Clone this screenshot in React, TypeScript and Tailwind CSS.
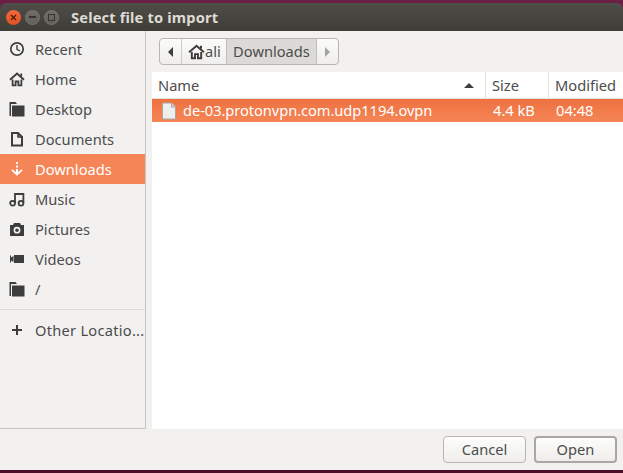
import React from 'react';

const RecentIcon = () => (
  <svg width="16" height="16" viewBox="0 0 16 16" fill="none" stroke="#3d3d3d">
    <circle cx="8" cy="8" r="6.2" strokeWidth="1.7" />
    <path d="M8 4v4.3L11 10" strokeWidth="1.4" />
  </svg>
);

const HomeIcon = ({ size = 16 }: { size?: number }) => (
  <svg width={size} height={size} viewBox="0 0 16 16" fill="none" stroke="#3d3d3d">
    <path d="M1 8.8 8 2.6l7 6.2" strokeWidth="1.9" />
    <path d="M12.2 5.5V2.5" strokeWidth="1.8" />
    <path d="M3.6 8.5V14.4H6.6V10.5H9.4V14.4H12.4V8.5" strokeWidth="1.8" />
  </svg>
);

const FolderIcon = () => (
  <svg width="16" height="16" viewBox="0 0 16 16" fill="#3d3d3d">
    <path d="M0.5 1h6l1.5 2H2v12H0.5Z" />
    <path d="M3 4.5h12.5V15.5H3Z" />
  </svg>
);

const DocumentIcon = () => (
  <svg width="16" height="16" viewBox="0 0 16 16" fill="none" stroke="#3d3d3d" strokeWidth="2">
    <path d="M3 2h6l4 4v8.5H3Z" />
    <path d="M9 1.5V6h4.5" strokeWidth="1.6" />
  </svg>
);

const DownloadIcon = () => (
  <svg width="16" height="16" viewBox="0 0 16 16" fill="#ffffff">
    <rect x="7" y="1" width="2" height="2" />
    <rect x="7" y="4.5" width="2" height="2" />
    <path d="M7 8h2v3.2l3.4-3 1.3 1.4L8 14.8 2.3 9.6l1.3-1.4L7 11.2Z" />
  </svg>
);

const MusicIcon = () => (
  <svg width="16" height="16" viewBox="0 0 16 16" fill="none" stroke="#3d3d3d" strokeWidth="1.8">
    <circle cx="3.6" cy="12.2" r="2.4" />
    <circle cx="12" cy="12.2" r="2.4" />
    <path d="M6 12V3h8.4v9" />
  </svg>
);

const CameraIcon = () => (
  <svg width="16" height="16" viewBox="0 0 16 16" fill="#3d3d3d">
    <path
      fillRule="evenodd"
      d="M1 4h3l1-2h6l1 2h3v11H1ZM8 5.8a3.4 3.4 0 1 0 0 6.8 3.4 3.4 0 0 0 0-6.8Z"
    />
    <circle cx="8" cy="9.2" r="1.7" />
  </svg>
);

const VideoIcon = () => (
  <svg width="16" height="16" viewBox="0 0 16 16" fill="#3d3d3d">
    <rect x="5" y="4" width="10" height="8" />
    <path d="M1 4.5h1v7H1ZM2 6.5 4.5 5v6L2 9.5Z" />
  </svg>
);

const PlusIcon = () => (
  <svg width="16" height="16" viewBox="0 0 16 16" fill="#3d3d3d">
    <path d="M7 3h2v4h4v2H9v4H7V9H3V7h4Z" />
  </svg>
);

const FileIcon = () => (
  <svg width="16" height="18" viewBox="0 0 16 18">
    <path d="M1.5 1h9l4 4v12h-13Z" fill="#eeeeec" stroke="#a9a7a2" />
    <path d="M10.5 1v4h4" fill="#d6d4d0" stroke="#a9a7a2" />
  </svg>
);

const places = [
  { label: 'Recent', icon: <RecentIcon /> },
  { label: 'Home', icon: <HomeIcon /> },
  { label: 'Desktop', icon: <FolderIcon /> },
  { label: 'Documents', icon: <DocumentIcon /> },
  { label: 'Downloads', icon: <DownloadIcon />, active: true },
  { label: 'Music', icon: <MusicIcon /> },
  { label: 'Pictures', icon: <CameraIcon /> },
  { label: 'Videos', icon: <VideoIcon /> },
  { label: '/', icon: <FolderIcon /> },
];

const PlaceRow = ({ label, icon, active }: { label: string; icon: React.ReactNode; active?: boolean }) => (
  <div
    className={`flex h-[30px] items-center gap-[10px] pl-[9px] ${active ? 'bg-[#f58556] text-white' : 'text-[#4c4c4c]'}`}
  >
    {icon}
    <span>{label}</span>
  </div>
);

const WindowButton = ({ children, close }: { children?: React.ReactNode; close?: boolean }) => (
  <div
    className={`flex h-[15px] w-[15px] items-center justify-center rounded-full ${
      close
        ? 'bg-gradient-to-b from-[#f2693a] to-[#e2501f]'
        : 'border border-[#77756e] bg-gradient-to-b from-[#6f6d66] to-[#62605a]'
    }`}
  >
    {children}
  </div>
);

export default function App() {
  return (
    <div
      className="flex h-[473px] w-[623px] flex-col overflow-hidden bg-[#f2f1f0] text-[14.67px] leading-none text-[#4c4c4c]"
      style={{ fontFamily: '"Noto Sans", sans-serif' }}
    >
      {/* title bar, sits on the desktop colour */}
      <div className="bg-[#6b1f45] pt-[3px]">
        <div className="flex h-[28px] items-center rounded-t-[6px] bg-gradient-to-b from-[#4f4d47] to-[#3e3d38] pl-[6px]">
          <div className="flex items-center gap-[4px]">
            <WindowButton close>
              <svg width="7" height="7" viewBox="0 0 7 7" stroke="#4a1a0a" strokeWidth="1.2">
                <path d="M1 1l5 5M6 1L1 6" />
              </svg>
            </WindowButton>
            <WindowButton>
              <div className="h-[2px] w-[7px] bg-[#35342f]" />
            </WindowButton>
            <WindowButton>
              <div className="h-[7px] w-[7px] border border-[#35342f]" />
            </WindowButton>
          </div>
          <span className="ml-[12px] text-[14.67px] font-bold tracking-[0.15px] text-[#dfdbd2]">
            Select file to import
          </span>
        </div>
      </div>

      {/* body */}
      <div className="flex h-[398px]">
        <div className="h-full w-[146px] shrink-0 border-r border-b border-[#c8c5c0] pt-[3px]">
          {places.map((p) => (
            <PlaceRow key={p.label} {...p} />
          ))}
          <div className="mt-[5px] border-t border-[#dedcd9] pt-[5px]">
            <div className="flex h-[30px] items-center gap-[10px] pl-[9px]">
              <PlusIcon />
              <span className="whitespace-nowrap tracking-[0.25px]">Other Locatio...</span>
            </div>
          </div>
        </div>

        <div className="flex min-w-0 flex-1 flex-col pl-[6px]">
          {/* path bar */}
          <div className="flex h-[41px] items-start pl-[7px] pt-[7px]">
            <div className="flex h-[27px] overflow-hidden rounded-[4px] border border-[#b9b6b0] bg-gradient-to-b from-[#fbfbfa] to-[#efeeec]">
              <div className="flex w-[22px] items-center justify-center border-r border-[#cfccc7]">
                <div className="h-0 w-0 border-y-[5px] border-r-[5px] border-y-transparent border-r-[#3d3d3d]" />
              </div>
              <div className="flex w-[44px] items-center pl-[6px]">
                <HomeIcon size={17} />
                <span>ali</span>
              </div>
              <div className="flex w-[91px] items-center justify-center border-x border-[#c2bfb9] bg-[#dcdad6]">
                Downloads
              </div>
              <div className="flex w-[21px] items-center justify-center">
                <div className="h-0 w-0 border-y-[5px] border-l-[5px] border-y-transparent border-l-[#a5a39e]" />
              </div>
            </div>
          </div>

          {/* file list */}
          <div className="flex-1 bg-white">
            <div className="flex h-[27px] items-stretch border-b border-[#e3e1de] pl-[6px]">
              <div className="flex w-[328px] items-center justify-between border-r border-[#e3e1de] pr-[11px]">
                <span>Name</span>
                <div className="h-0 w-0 border-x-[5px] border-b-[5px] border-x-transparent border-b-[#3d3d3d]" />
              </div>
              <div className="flex w-[63px] items-center border-r border-[#e3e1de] pl-[6px]">Size</div>
              <div className="flex flex-1 items-center whitespace-nowrap pl-[6px]">Modified</div>
            </div>
            <div className="flex h-[23px] items-center bg-gradient-to-b from-[#ef7140] to-[#f58556] text-white">
              <div className="flex w-[334px] items-center gap-[6px] pl-[9px]">
                <FileIcon />
                <span className="whitespace-nowrap tracking-[-0.06px]">de-03.protonvpn.com.udp1194.ovpn</span>
              </div>
              <div className="w-[63px] pl-[7px]">4.4 kB</div>
              <div className="pl-[7px]">04:48</div>
            </div>
          </div>
        </div>
      </div>

      {/* footer */}
      <div className="flex h-[41px] items-start justify-end gap-[8px] pr-[6px] pt-[7px]">
        <button className="h-[27px] w-[83px] rounded-[4px] border border-[#b9b6b0] bg-gradient-to-b from-[#fdfdfc] to-[#eeedeb]">
          Cancel
        </button>
        <button className="h-[27px] w-[83px] rounded-[4px] border-2 border-[#a9a7a2] bg-gradient-to-b from-[#fdfdfc] to-[#eeedeb]">
          Open
        </button>
      </div>

      <div className="h-[3px] bg-[#4a1028]" />
    </div>
  );
}
